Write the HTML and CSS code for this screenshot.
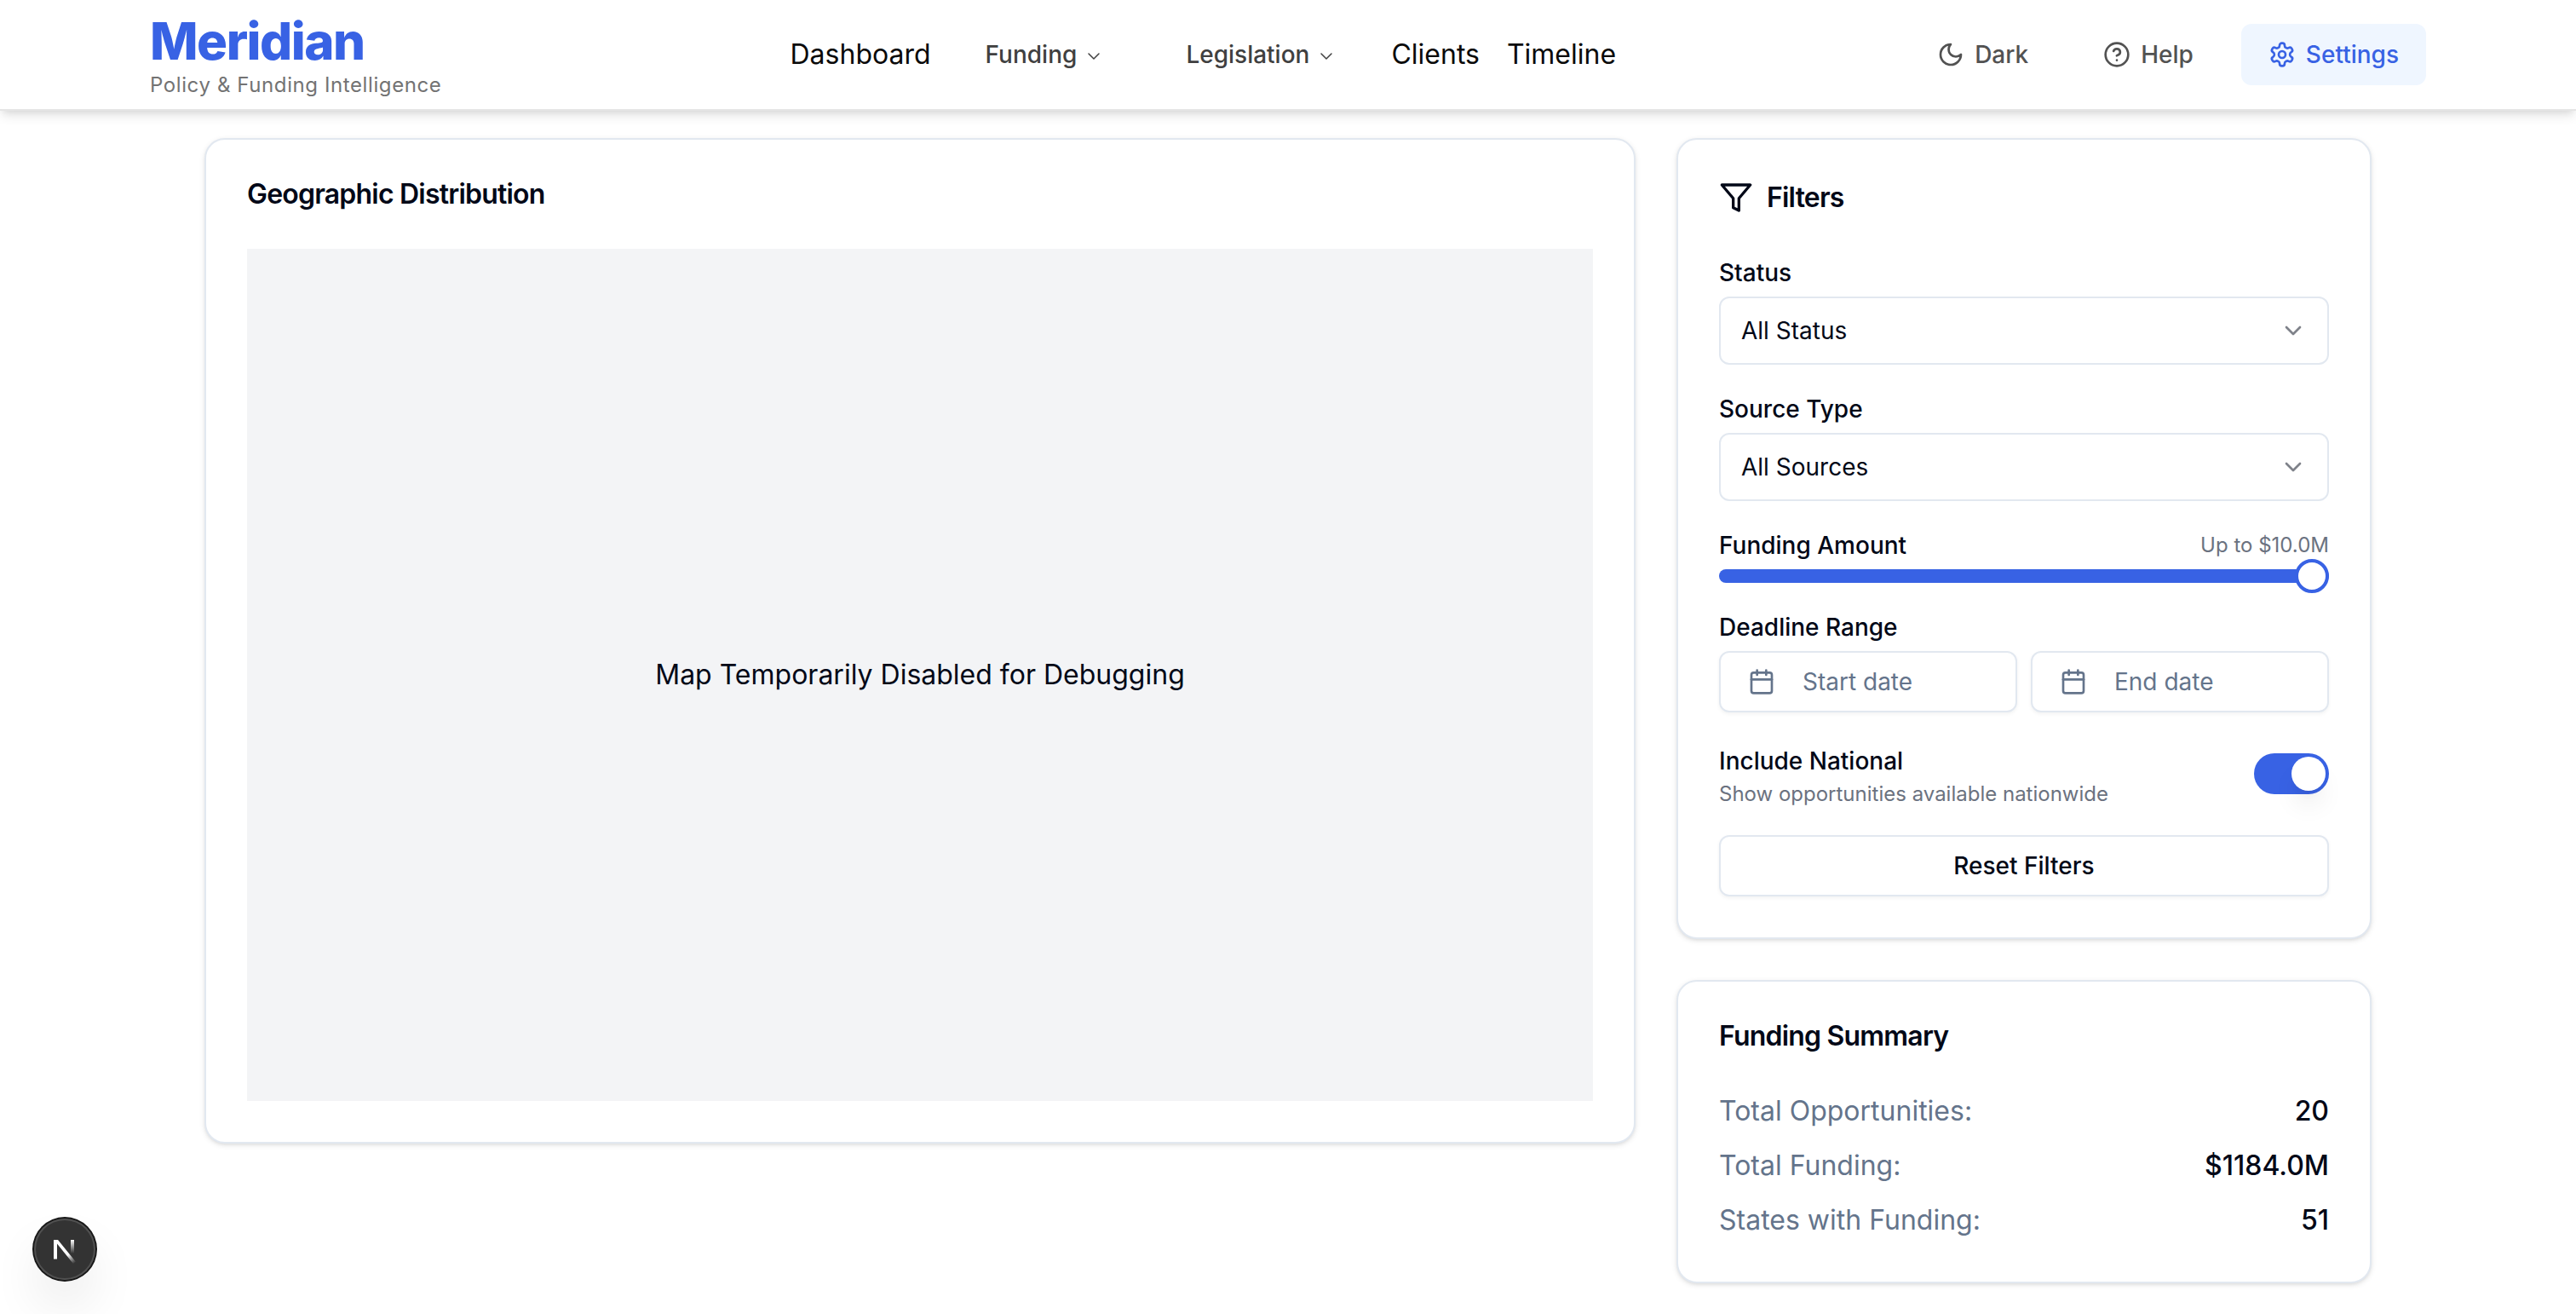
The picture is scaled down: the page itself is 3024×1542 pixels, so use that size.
FILE: index.html
```html
<!DOCTYPE html>
<html lang="en">
<head>
<meta charset="utf-8">
<meta name="viewport" content="width=device-width, initial-scale=1">
<title>Meridian</title>
<link rel="stylesheet" href="styles.css">
</head>
<body>
<header class="site-header">
  <div class="header-inner">
    <a class="brand" href="#">
      <span class="brand-name">Meridian</span>
      <span class="brand-tagline">Policy &amp; Funding Intelligence</span>
    </a>
    <nav class="main-nav" aria-label="Main">
      <a class="nav-link" href="#">Dashboard</a>
      <button class="nav-menu" type="button">Funding
        <svg class="icon icon-xs" viewBox="0 0 24 24" aria-hidden="true"><path d="m6 9 6 6 6-6"/></svg>
      </button>
      <button class="nav-menu" type="button">Legislation
        <svg class="icon icon-xs" viewBox="0 0 24 24" aria-hidden="true"><path d="m6 9 6 6 6-6"/></svg>
      </button>
      <a class="nav-link" href="#">Clients</a>
      <a class="nav-link" href="#">Timeline</a>
    </nav>
    <div class="header-actions">
      <button class="action" type="button">
        <svg class="icon icon-sm" viewBox="0 0 24 24" aria-hidden="true"><path d="M12 3a6 6 0 0 0 9 9 9 9 0 1 1-9-9Z"/></svg>
        Dark
      </button>
      <button class="action" type="button">
        <svg class="icon icon-sm" viewBox="0 0 24 24" aria-hidden="true"><circle cx="12" cy="12" r="10"/><path d="M9.09 9a3 3 0 0 1 5.83 1c0 2-3 3-3 3"/><path d="M12 17h.01"/></svg>
        Help
      </button>
      <a class="action action-active" href="#">
        <svg class="icon icon-sm" viewBox="0 0 24 24" aria-hidden="true"><path d="M12.22 2h-.44a2 2 0 0 0-2 2v.18a2 2 0 0 1-1 1.73l-.43.25a2 2 0 0 1-2 0l-.15-.08a2 2 0 0 0-2.73.73l-.22.38a2 2 0 0 0 .73 2.73l.15.1a2 2 0 0 1 1 1.72v.51a2 2 0 0 1-1 1.74l-.15.09a2 2 0 0 0-.73 2.73l.22.38a2 2 0 0 0 2.73.73l.15-.08a2 2 0 0 1 2 0l.43.25a2 2 0 0 1 1 1.73V20a2 2 0 0 0 2 2h.44a2 2 0 0 0 2-2v-.18a2 2 0 0 1 1-1.73l.43-.25a2 2 0 0 1 2 0l.15.08a2 2 0 0 0 2.73-.73l.22-.39a2 2 0 0 0-.73-2.73l-.15-.08a2 2 0 0 1-1-1.74v-.5a2 2 0 0 1 1-1.74l.15-.09a2 2 0 0 0 .73-2.73l-.22-.38a2 2 0 0 0-2.73-.73l-.15.08a2 2 0 0 1-2 0l-.43-.25a2 2 0 0 1-1-1.73V4a2 2 0 0 0-2-2z"/><circle cx="12" cy="12" r="3"/></svg>
        Settings
      </a>
    </div>
  </div>
</header>

<main class="page">
  <section class="card map-card">
    <h2 class="card-title">Geographic Distribution</h2>
    <div class="map-placeholder">Map Temporarily Disabled for Debugging</div>
  </section>

  <aside class="sidebar">
    <section class="card">
      <h2 class="card-title filters-title">
        <svg class="icon icon-md" viewBox="0 0 24 24" aria-hidden="true"><path d="M22 3H2l8 9.46V19l4 2v-8.54L22 3z"/></svg>
        Filters
      </h2>
      <form class="filters">
        <div class="field">
          <label class="field-label" for="status">Status</label>
          <div class="select-wrap">
            <select class="select" id="status"><option>All Status</option></select>
            <svg class="icon icon-sm select-arrow" viewBox="0 0 24 24" aria-hidden="true"><path d="m6 9 6 6 6-6"/></svg>
          </div>
        </div>
        <div class="field">
          <label class="field-label" for="source">Source Type</label>
          <div class="select-wrap">
            <select class="select" id="source"><option>All Sources</option></select>
            <svg class="icon icon-sm select-arrow" viewBox="0 0 24 24" aria-hidden="true"><path d="m6 9 6 6 6-6"/></svg>
          </div>
        </div>
        <div class="field">
          <div class="field-head">
            <label class="field-label" for="amount">Funding Amount</label>
            <output class="hint" for="amount">Up to $10.0M</output>
          </div>
          <input class="slider" id="amount" type="range" min="0" max="10" value="10">
        </div>
        <div class="field" role="group" aria-labelledby="deadline">
          <span class="field-label" id="deadline">Deadline Range</span>
          <div class="dates">
            <button class="outline-button date-button" type="button">
              <svg class="icon icon-sm" viewBox="0 0 24 24" aria-hidden="true"><path d="M8 2v4"/><path d="M16 2v4"/><rect width="18" height="18" x="3" y="4" rx="2"/><path d="M3 10h18"/></svg>
              Start date
            </button>
            <button class="outline-button date-button" type="button">
              <svg class="icon icon-sm" viewBox="0 0 24 24" aria-hidden="true"><path d="M8 2v4"/><path d="M16 2v4"/><rect width="18" height="18" x="3" y="4" rx="2"/><path d="M3 10h18"/></svg>
              End date
            </button>
          </div>
        </div>
        <div class="toggle-row">
          <div>
            <label class="toggle-label" for="national">Include National</label>
            <p class="hint" id="national-hint">Show opportunities available nationwide</p>
          </div>
          <input class="switch" id="national" type="checkbox" role="switch" aria-describedby="national-hint" checked>
        </div>
        <button class="outline-button reset-button" type="button">Reset Filters</button>
      </form>
    </section>

    <section class="card">
      <h2 class="card-title">Funding Summary</h2>
      <dl class="summary">
        <div class="summary-row"><dt>Total Opportunities:</dt><dd>20</dd></div>
        <div class="summary-row"><dt>Total Funding:</dt><dd>$1184.0M</dd></div>
        <div class="summary-row"><dt>States with Funding:</dt><dd>51</dd></div>
      </dl>
    </section>
  </aside>
</main>

<button class="dev-badge" type="button" aria-label="Open developer tools">
  <svg class="dev-mark" viewBox="0 0 72 72" aria-hidden="true">
    <defs>
      <linearGradient id="diagonal-fade" gradientUnits="userSpaceOnUse" x1="40" y1="42" x2="48" y2="52"><stop stop-color="#fff"/><stop offset="1" stop-color="#fff" stop-opacity="0"/></linearGradient>
      <linearGradient id="stem-fade" gradientUnits="userSpaceOnUse" x1="45" y1="25" x2="45" y2="41"><stop stop-color="#fff"/><stop offset="1" stop-color="#fff" stop-opacity="0"/></linearGradient>
    </defs>
    <path d="M23 25h5L49.500 51.500 46 53 27 29.500V47.500H23Z" fill="url(#diagonal-fade)"/>
    <path d="M43 25h4V48h-4Z" fill="url(#stem-fade)"/>
  </svg>
</button>
</body>
</html>
```
FILE: styles.css
```css
:root {
  --primary: #3862e4;
  --text: #020817;
  --muted: #64748b;
  --hint: #6b7280;
  --border: #e2e8f0;
}

*, *::before, *::after { box-sizing: border-box; }

body {
  margin: 0;
  background: #fff;
  color: var(--text);
  font: 400 32px/48px Inter, "Liberation Sans", sans-serif;
  font-optical-sizing: none;
}

h2, p, dl, dd { margin: 0; }
a { color: inherit; text-decoration: none; }

button, input, select {
  margin: 0;
  font: inherit;
  color: inherit;
}

button {
  border: 0;
  background: none;
  cursor: pointer;
}

.icon {
  flex: none;
  fill: none;
  stroke: currentColor;
  stroke-width: 2;
  stroke-linecap: round;
  stroke-linejoin: round;
}
.icon-xs { width: 24px; height: 24px; }
.icon-sm { width: 32px; height: 32px; }
.icon-md { width: 40px; height: 40px; }

/* Header */
.site-header {
  position: sticky;
  top: 0;
  z-index: 10;
  background: #fff;
  border-bottom: 2px solid #e5e5e5;
  box-shadow: 0 8px 12px -2px rgba(0, 0, 0, .1), 0 4px 8px -4px rgba(0, 0, 0, .1);
}

.header-inner {
  display: flex;
  align-items: center;
  max-width: 2800px;
  height: 128px;
  margin: 0 auto;
  padding: 0 64px;
}

.brand {
  display: flex;
  flex-direction: column;
  margin-right: 64px;
}

.brand-name {
  color: var(--primary);
  font-size: 60px;
  font-weight: 800;
  line-height: 72px;
  letter-spacing: -0.025em;
}

.brand-tagline {
  color: #737373;
  font-size: 24px;
  line-height: 32px;
  letter-spacing: 0.025em;
}

.main-nav {
  display: flex;
  flex: 1;
  align-items: center;
  justify-content: center;
  gap: 32px;
  color: #0a0a0a;
}

.nav-menu, .action {
  display: flex;
  align-items: center;
  height: 72px;
  padding: 0 32px;
  border-radius: 12px;
  font-size: 28px;
  font-weight: 500;
  line-height: 40px;
}
.nav-menu { gap: 8px; color: #404040; }
.nav-menu .icon { margin-top: 4px; stroke-width: 1.5; }

.header-actions { display: flex; gap: 24px; }
.action { gap: 12px; color: #525252; }
.action-active { background: #eff6ff; color: var(--primary); }

/* Page */
.page {
  display: grid;
  grid-template-columns: repeat(3, minmax(0, 1fr));
  align-items: start;
  gap: 48px;
  max-width: 2640px;
  margin: 0 auto;
  padding: 32px 48px 36px;
}

.map-card { grid-column: span 2; }
.sidebar { display: grid; gap: 48px; }

.card {
  display: grid;
  gap: 48px;
  padding: 48px;
  border: 2px solid var(--border);
  border-radius: 24px;
  background: #fff;
  box-shadow: 0 2px 6px rgba(0, 0, 0, .1), 0 2px 4px -2px rgba(0, 0, 0, .1);
}

.card-title {
  font-size: 32px;
  font-weight: 600;
  line-height: 32px;
  letter-spacing: -0.025em;
}

.map-placeholder {
  display: flex;
  align-items: center;
  justify-content: center;
  min-height: 1000px;
  background: #f3f4f6;
}

/* Filters */
.filters-title {
  display: flex;
  align-items: center;
  gap: 16px;
  line-height: 40px;
}

.filters { display: grid; gap: 32px; }
.field { display: grid; gap: 8px; }

.field-head {
  display: flex;
  align-items: center;
  justify-content: space-between;
}

.field-label, .toggle-label {
  display: block;
  font-size: 28px;
  font-weight: 500;
  line-height: 40px;
}
.toggle-label { padding-top: 2px; line-height: 46px; }

.hint {
  color: var(--hint);
  font-size: 24px;
  line-height: 32px;
}

.select-wrap { position: relative; }

.select {
  display: block;
  width: 100%;
  height: 80px;
  padding: 0 24px;
  border: 2px solid var(--border);
  border-radius: 12px;
  background: #fff;
  font-size: 28px;
  line-height: 40px;
  appearance: none;
}

.select-arrow {
  position: absolute;
  top: 24px;
  right: 26px;
  opacity: .5;
  pointer-events: none;
}

.slider {
  display: block;
  width: 100%;
  height: 16px;
  border-radius: 8px;
  background: var(--primary);
  appearance: none;
}

.slider::-webkit-slider-thumb {
  width: 40px;
  height: 40px;
  border: 4px solid var(--primary);
  border-radius: 50%;
  background: #fff;
  appearance: none;
}

.outline-button {
  display: flex;
  align-items: center;
  height: 72px;
  padding: 0 32px;
  border: 2px solid var(--border);
  border-radius: 12px;
  background: #fff;
  box-shadow: 0 2px 4px rgba(0, 0, 0, .05);
  font-size: 28px;
  line-height: 40px;
}

.dates {
  display: grid;
  grid-template-columns: 1fr 1fr;
  gap: 16px;
}

.date-button { gap: 32px; color: var(--muted); }
.reset-button { justify-content: center; font-weight: 500; }

.toggle-row {
  display: flex;
  align-items: center;
  justify-content: space-between;
}

.switch {
  display: flex;
  align-items: center;
  justify-content: flex-end;
  width: 88px;
  height: 48px;
  padding: 4px;
  border-radius: 24px;
  background: var(--primary);
  appearance: none;
}

.switch::before {
  width: 40px;
  height: 40px;
  border-radius: 50%;
  background: #fff;
  box-shadow: 0 20px 30px -6px rgba(0, 0, 0, .1), 0 8px 12px -8px rgba(0, 0, 0, .1);
  content: "";
}

/* Summary */
.summary { display: grid; gap: 16px; }

.summary-row {
  display: flex;
  justify-content: space-between;
}
.summary-row dt { color: var(--muted); }
.summary-row dd { font-weight: 500; }

/* Floating developer badge */
.dev-badge {
  position: fixed;
  bottom: 40px;
  left: 40px;
  width: 72px;
  height: 72px;
  padding: 0;
  border-radius: 50%;
  background: #333;
  box-shadow: 0 0 0 2px #171717, inset 0 0 0 2px #505050, 0 32px 64px -16px rgba(0, 0, 0, .24);
}

.dev-mark { display: block; width: 72px; height: 72px; }
```
